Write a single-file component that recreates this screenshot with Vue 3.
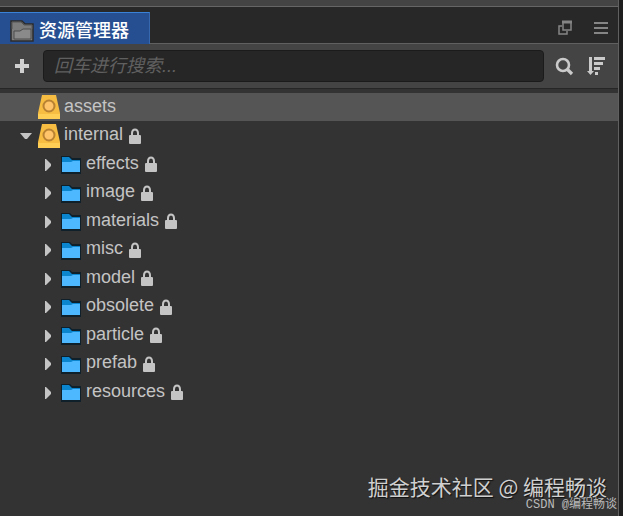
<template>
  <div class="window">
    <div class="panel">
      <div class="divider"></div>
      <header class="tabs">
        <button type="button" class="tab">
          <svg class="tab__icon" width="24" height="22" viewBox="0 0 24 22">
            <path d="M1 1h11l3 3h8v17H1z" fill="#7c7c7c" stroke="#2b2b2b" stroke-width="1.5"></path>
            <path d="M2 9V2h9l3 3h8v4" fill="none" stroke="#555" stroke-width="1"></path>
            <path d="M4 11h6l3-2h8v10H4z" fill="#8a8a8a" stroke="#4d4d4d" stroke-width="1"></path>
          </svg>
          <span>资源管理器</span>
        </button>
        <div class="tabs__tools">
          <button type="button" class="icon-button" aria-label="弹出">
            <svg width="16" height="16" viewBox="0 0 16 16" fill="none" stroke="#858585">
              <path d="M6 2h8v8H6z" stroke-width="1.5"></path>
              <path d="M5 2h10" stroke-width="3"></path>
              <path d="M5 6H2v8h8v-3" stroke-width="1.5"></path>
            </svg>
          </button>
          <button type="button" class="icon-button" aria-label="菜单">
            <svg width="16" height="16" viewBox="0 0 16 16" fill="none" stroke="#858585" stroke-width="2">
              <path d="M1 3h14M1 8h14M1 13h14"></path>
            </svg>
          </button>
        </div>
      </header>

      <div class="toolbar">
        <button type="button" class="icon-button" aria-label="新建">
          <svg width="16" height="16" viewBox="0 0 16 16">
            <path d="M6 1h4v5h5v4h-5v5H6v-5H1V6h5z" fill="#d0d0d0"></path>
          </svg>
        </button>
        <input v-model="keyword" class="search" type="text" placeholder="回车进行搜索..." aria-label="搜索" />
        <button type="button" class="icon-button" aria-label="查找">
          <svg width="20" height="20" viewBox="0 0 20 20" fill="none" stroke="#cacaca">
            <circle cx="9" cy="9" r="6" stroke-width="2.6"></circle>
            <path d="M13 13l5 5" stroke-width="3.2"></path>
          </svg>
        </button>
        <button type="button" class="icon-button" aria-label="排序">
          <svg width="20" height="20" viewBox="0 0 20 20" fill="#cacaca">
            <path d="M3 1h3v14h2l-3.5 4L1 15h2z"></path>
            <path d="M8 1h11v3H8zM8 6h9v3H8zM8 11h6v3H8zM9 16h3v3H9z"></path>
          </svg>
        </button>
      </div>

      <ul class="tree">
        <li
          v-for="item in items"
          :key="item.name"
          :class="['row', { 'row--child': item.child, 'row--active': item.name === selected }]"
          @click="selected = item.name"
        >
          <button v-if="item.locked" type="button" class="arrow" :aria-label="item.name">
            <svg v-if="item.child" width="12" height="12" viewBox="0 0 12 12">
              <path d="M3 0h1l5 5v2l-5 5H3z" fill="#c4c4c4"></path>
            </svg>
            <svg v-else width="12" height="12" viewBox="0 0 12 12">
              <path d="M0 3h12L7 9H5z" fill="#c4c4c4"></path>
            </svg>
          </button>
          <span v-else class="arrow"></span>

          <svg v-if="item.child" class="row__icon" width="20" height="20" viewBox="0 0 20 20">
            <path d="M0 2h9l2 2h9v16H0z" fill="#10202b"></path>
            <path d="M1 3h7l3 3h8v3H1z" fill="#0c85cf"></path>
            <path d="M1 8h9l2-1h7v11H1z" fill="#4db8ff"></path>
          </svg>
          <svg v-else class="row__icon" width="22" height="24" viewBox="0 0 22 24">
            <path d="M4 0h14l4 18v6H0v-6z" fill="#f6bd42"></path>
            <path d="M0 19h22v5H0z" fill="#ffce55"></path>
            <circle cx="11" cy="11" r="5.5" fill="#ffc46a" stroke="#b98232" stroke-width="2"></circle>
          </svg>

          <span class="row__name">{{ item.name }}</span>

          <svg v-if="item.locked" class="row__lock" width="12" height="16" viewBox="0 0 12 16">
            <path d="M3 8V5a3 3.500 0 0 1 6 0v3" fill="none" stroke="#c4c4c4" stroke-width="2"></path>
            <rect y="7" width="12" height="9" rx="1" fill="#c4c4c4"></rect>
          </svg>
        </li>
      </ul>
    </div>

    <div class="watermark">掘金技术社区 @ 编程畅谈</div>
    <div class="credit">CSDN @编程畅谈</div>
  </div>
</template>

<script setup>
import { ref } from 'vue';

const keyword = ref('');
const selected = ref('assets');

const folders = ['effects', 'image', 'materials', 'misc', 'model', 'obsolete', 'particle', 'prefab', 'resources'];

const items = [
  { name: 'assets', child: false, locked: false },
  { name: 'internal', child: false, locked: true },
  ...folders.map((name) => ({ name, child: true, locked: true }))
];
</script>

<style>
body {
  margin: 0;
  background: #1e1e1e;
}
</style>

<style scoped>
.window {
  position: relative;
  display: flex;
  box-sizing: border-box;
  min-height: 100vh;
  padding-right: 4px;
  background: #1e1e1e;
  font-family: "Liberation Sans", "Noto Sans CJK SC", sans-serif;
  font-size: 18px;
}

.panel {
  flex: 1;
  min-width: 0;
  background: #333;
  border-right: 1px solid #606060;
}

.divider {
  height: 6px;
  background: #444;
  border-bottom: 1px solid #666;
}

.tabs {
  display: flex;
  justify-content: space-between;
  height: 32px;
  padding-top: 5px;
  background: #282828;
}

.tab {
  display: flex;
  align-items: center;
  gap: 5px;
  padding: 4px 20px 0 10px;
  border: 0;
  border-top: 1px solid #3a82d8;
  border-right: 1px solid #3568ae;
  background: #264f91;
  color: #fff;
  font: inherit;
  font-weight: 500;
  line-height: 24px;
}

.tabs__tools {
  display: flex;
  align-items: center;
  flex: 1;
  justify-content: flex-end;
  gap: 20px;
  padding-right: 9px;
  border-bottom: 1px solid #606060;
}

.icon-button {
  display: flex;
  flex-shrink: 0;
  padding: 0;
  border: 0;
  background: none;
}

.toolbar {
  display: flex;
  align-items: center;
  gap: 12px;
  height: 44px;
  padding: 0 12px 0 14px;
  background: #444;
  border-bottom: 1px solid #262626;
}

.search {
  flex: 1;
  box-sizing: border-box;
  min-width: 0;
  height: 32px;
  margin: 0 -2px 0 1px;
  padding: 0 10px;
  border: 1px solid #1b1b1b;
  border-radius: 4px;
  outline: 0;
  background: #262626;
  color: #c4c4c4;
  font: inherit;
}

.search::placeholder {
  color: #606060;
  font-style: italic;
  opacity: 1;
}

.tree {
  display: grid;
  grid-auto-rows: 28px 29px;
  margin: 0;
  padding: 4px 0;
  list-style: none;
}

.row {
  display: flex;
  align-items: center;
  padding-left: 20px;
  color: #c4c4c4;
}

.row--child {
  padding-left: 42px;
}

.row--active {
  background: #555;
}

.arrow {
  display: flex;
  width: 12px;
  margin-right: 6px;
  padding: 0;
  border: 0;
  background: none;
}

.row__icon {
  margin-right: 4px;
}

.row--child .arrow {
  margin-right: 7px;
  padding-top: 1px;
}

.row--child .row__icon {
  margin-right: 5px;
}

.row__name {
  line-height: 24px;
  padding-bottom: 3px;
}

.row__lock {
  margin-left: 6px;
}

.watermark {
  position: absolute;
  right: 16px;
  bottom: 20px;
  color: #d0d0d0;
  font-family: "Noto Sans CJK SC", sans-serif;
  font-size: 21px;
  line-height: 20px;
  text-shadow: 1px 1px 1px #111;
  white-space: nowrap;
}

.credit {
  position: absolute;
  right: 6px;
  bottom: 5px;
  color: #bbb;
  font-family: "Liberation Mono", "Noto Sans CJK SC", monospace;
  font-size: 12px;
  line-height: 12px;
  white-space: nowrap;
}
</style>
